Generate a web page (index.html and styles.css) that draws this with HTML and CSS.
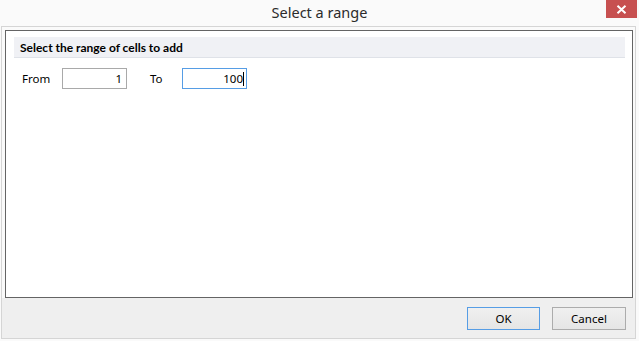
FILE: index.html
```html
<!DOCTYPE html>
<html>
<head>
<meta charset="utf-8">
<title>Select a range</title>
<link rel="stylesheet" href="styles.css">
</head>
<body>
<div class="window">
  <div class="titlebar">
    <span class="title">Select a range</span>
    <div class="close" aria-label="Close">
      <svg width="11" height="9" viewBox="0 0 11 9"><path d="M1.5 0.8 L9.5 8.2 M9.5 0.8 L1.5 8.2" stroke="#fff" stroke-width="2" fill="none"/></svg>
    </div>
  </div>
  <div class="frame">
    <div class="content">
      <div class="panel">
        <div class="header">Select the range of cells to add</div>
        <div class="row">
          <span class="label label-from">From</span>
          <div class="field">1</div>
          <span class="label label-to">To</span>
          <div class="field field-focus">100<span class="caret"></span></div>
        </div>
      </div>
    </div>
    <div class="footer">
      <div class="btn btn-default">OK</div>
      <div class="btn btn-cancel">Cancel</div>
    </div>
  </div>
</div>
</body>
</html>
```
FILE: styles.css
```css
* { box-sizing: border-box; }
html, body { margin: 0; padding: 0; }
body {
  background: #fafafa;
  font-family: "Noto Sans", "Open Sans", "Liberation Sans", sans-serif;
  font-size: 11.5px;
  color: #000;
}
.window {
  width: 639px;
  height: 341px;
  background: #fafafa;
}
.titlebar {
  position: relative;
  height: 26px;
  display: flex;
  justify-content: center;
  align-items: center;
}
.title {
  font-size: 14.5px;
  color: #2b2b2b;
  margin-top: -3px;
}
.close {
  position: absolute;
  top: 0;
  left: 606px;
  width: 31px;
  height: 18px;
  background: #c75050;
  display: flex;
  align-items: center;
  justify-content: center;
}
.frame {
  margin-left: 1px;
  width: 635px;
  height: 313px;
  border: 1px solid #d5d5d5;
  display: flex;
  flex-direction: column;
}
.content {
  padding: 3px 2px 0 3px;
  background: #fafafa;
}
.panel {
  height: 268px;
  border: 1px solid #646464;
  background: #fff;
  padding: 6px 7px 0 8px;
}
.header {
  height: 21px;
  background: #f0f1f5;
  border-bottom: 1px solid #dfe2e8;
  font-family: Lato, "Noto Sans", sans-serif;
  font-weight: bold;
  font-size: 12px;
  padding: 1px 0 0 6px;
  line-height: 19px;
}
.row {
  display: flex;
  align-items: center;
  margin-top: 10px;
  height: 21px;
}
.label {
  display: block;
}
.label-from {
  margin-left: 8px;
  width: 40px;
}
.label-to {
  margin-left: 23px;
  width: 32px;
}
.field {
  position: relative;
  width: 65px;
  height: 21px;
  border: 1px solid #a9a9a9;
  text-align: right;
  padding-right: 4px;
  line-height: 19px;
}
.field-focus {
  border-color: #569de5;
  padding-right: 2px;
}
.caret {
  display: inline-block;
  width: 1px;
  height: 14px;
  background: #000;
  vertical-align: middle;
  margin-top: -2px;
}
.footer {
  flex: 1;
  background: #efefef;
  display: flex;
  justify-content: flex-end;
  gap: 12px;
  padding: 9px 9px 0 0;
}
.btn {
  width: 73px;
  height: 23px;
  border: 1px solid #acacac;
  background: linear-gradient(#f0f0f0, #e5e5e5);
  display: flex;
  align-items: center;
  justify-content: center;
  color: #000;
}
.btn-cancel {
  width: 74px;
}
.btn-default {
  border-color: #569de5;
}
```
